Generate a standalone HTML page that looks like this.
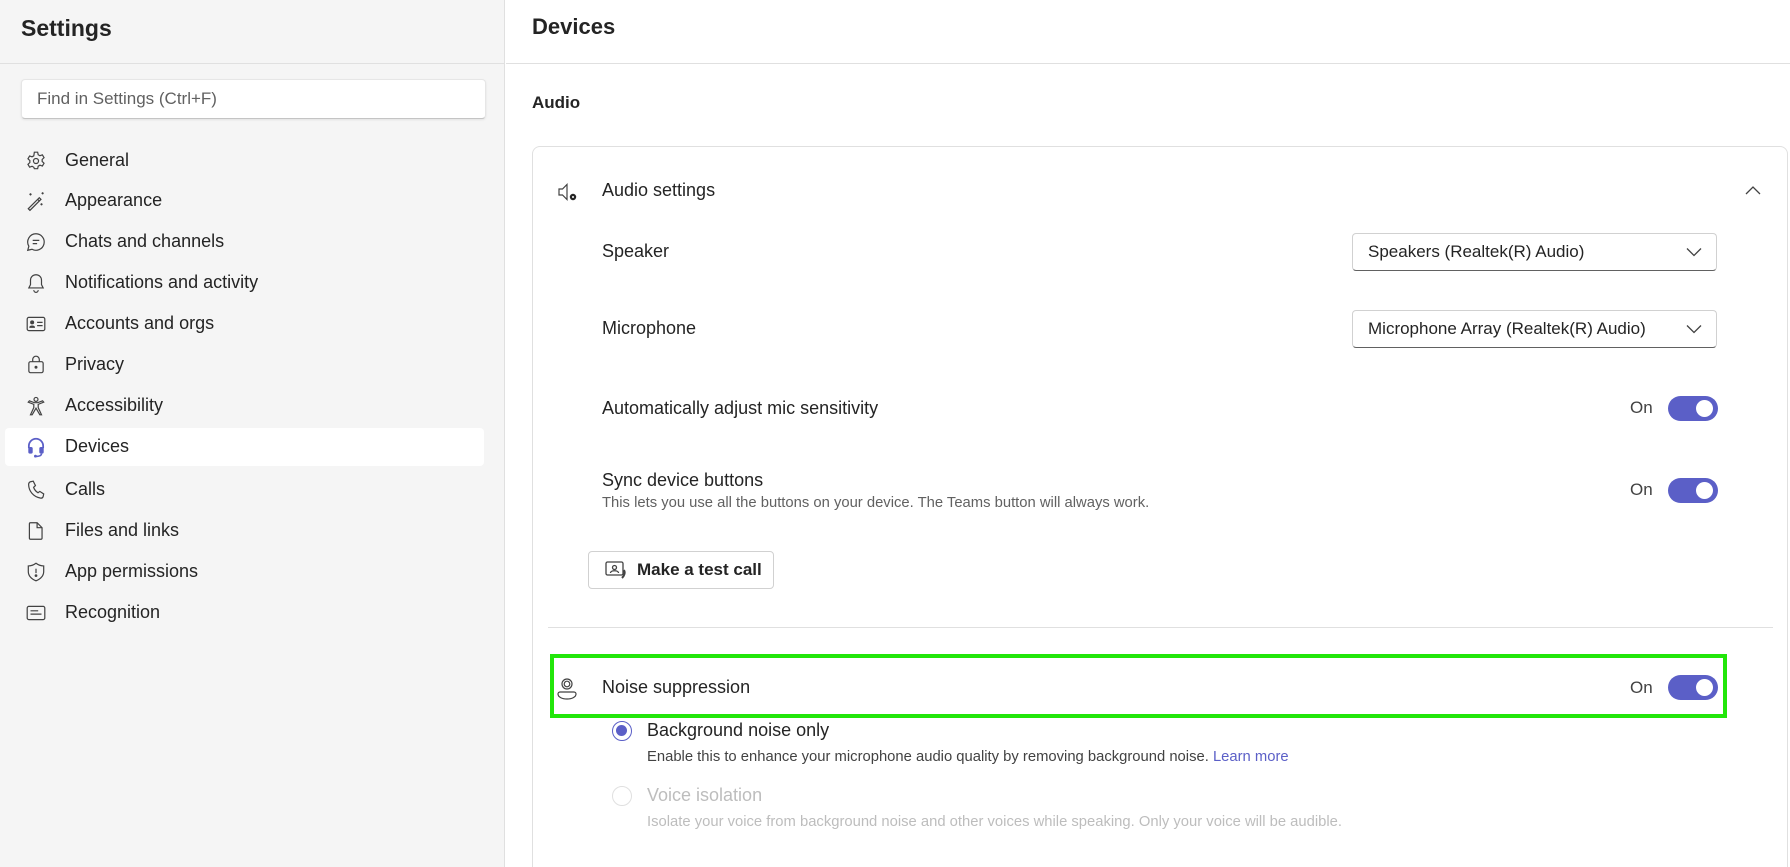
<!DOCTYPE html>
<html style="height:867px;overflow:hidden"><head><meta charset="utf-8"><style>
*{box-sizing:border-box;margin:0;padding:0}
body{width:1790px;height:867px;overflow:hidden;font-family:"Segoe UI","Liberation Sans",sans-serif;color:#242424;background:#fff;position:relative}
.abs{position:absolute}
#side{left:0;top:0;width:505px;height:867px;background:#f5f5f5;border-right:1px solid #e0e0e0}
.hline{height:1px;background:#e0e0e0}
.nav{position:absolute;left:0;width:505px;height:41px;display:flex;align-items:center;font-size:18px;color:#242424}
.nav svg{position:absolute;left:25px;width:22px;height:22px}
.nav span{position:absolute;left:65px}
.lbl{position:absolute;font-size:18px;white-space:nowrap}
.sub{position:absolute;font-size:14.8px;color:#616161;white-space:nowrap}
.dd{position:absolute;left:1352px;width:365px;height:38px;border:1px solid #d1d1d1;border-bottom:1px solid #616161;border-radius:4px;font-size:17px;padding:8px 15px;background:#fff}
.dd svg{position:absolute;right:14px;top:13px}
.tg{position:absolute;left:1668px;width:50px;height:25px;border-radius:13px;background:#5b5fc7}
.tg:after{content:"";position:absolute;right:5px;top:4px;width:17px;height:17px;border-radius:50%;background:#fff}
.on{position:absolute;left:1630px;font-size:17px;color:#424242}
</style></head><body>
<div id="side" class="abs">
  <div class="abs" style="left:21px;top:15px;font-size:23px;font-weight:bold">Settings</div>
  <div class="abs hline" style="left:0;top:63px;width:505px"></div>
  <div class="abs" style="left:21px;top:79px;width:465px;height:40px;background:#fff;border-radius:4px;border:1px solid #e6e6e6;border-bottom:1px solid #c4c4c4;box-shadow:0 1px 2px rgba(0,0,0,.08);font-size:17px;color:#616161;padding:9px 15px">Find in Settings (Ctrl+F)</div>
  <div class="abs" style="left:5px;top:428px;width:479px;height:38px;background:#fff;border-radius:4px"></div>
  <div class="nav" style="top:140px"><svg viewBox="0 0 20 20" fill="none" stroke="#424242" stroke-width="1.1"><path d="M8.5 2h3l.5 2.3 1.6.9 2.2-.8 1.5 2.6-1.7 1.6v1.8l1.7 1.6-1.5 2.6-2.2-.8-1.6.9-.5 2.3h-3L8 15.7l-1.6-.9-2.2.8-1.5-2.6 1.7-1.6V9.6L2.7 8 4.2 5.4l2.2.8L8 5.3z"/><circle cx="10" cy="10" r="2.3"/></svg><span>General</span></div>
  <div class="nav" style="top:180px"><svg viewBox="0 0 20 20" fill="none" stroke="#424242" stroke-width="1.1"><path d="M3 17L13 7l1.5 1.5-10 10z M11.5 8.5L13 10"/><path d="M5 3v2M4 4h2M16 2v2M15 3h2M15 12v2M14 13h2" /></svg><span>Appearance</span></div>
  <div class="nav" style="top:221px"><svg viewBox="0 0 20 20" fill="none" stroke="#424242" stroke-width="1.1"><path d="M10 2.5a7.5 7.5 0 1 1-3.6 14.1L2.5 17.5l1-3.7A7.5 7.5 0 0 1 10 2.5z"/><path d="M7 8.5h6M7 11.5h4"/></svg><span>Chats and channels</span></div>
  <div class="nav" style="top:262px"><svg viewBox="0 0 20 20" fill="none" stroke="#424242" stroke-width="1.1"><path d="M10 2.5c3 0 5 2.3 5 5v4l1.5 3h-13L5 11.5v-4c0-2.7 2-5 5-5z"/><path d="M8 16.5a2 2 0 0 0 4 0"/></svg><span>Notifications and activity</span></div>
  <div class="nav" style="top:303px"><svg viewBox="0 0 20 20" fill="none" stroke="#424242" stroke-width="1.1"><rect x="2" y="4" width="16" height="12" rx="1.5"/><circle cx="6.5" cy="8.5" r="1.3" fill="#424242"/><path d="M4.5 13c0-1.5 4-1.5 4 0z" fill="#424242"/><path d="M11 8.5h5M11 11.5h5"/></svg><span>Accounts and orgs</span></div>
  <div class="nav" style="top:344px"><svg viewBox="0 0 20 20" fill="none" stroke="#424242" stroke-width="1.1"><rect x="3.5" y="7" width="13" height="10" rx="1.5"/><path d="M7 7V5a3 3 0 0 1 6 0v2"/><circle cx="10" cy="12" r=".8" fill="#424242"/></svg><span>Privacy</span></div>
  <div class="nav" style="top:385px"><svg viewBox="0 0 20 20" fill="none" stroke="#424242" stroke-width="1.1"><circle cx="10" cy="4" r="1.8"/><path d="M3 6.5l5 2v3l-3 6.5h1.5L10 12l3.5 6H15l-3-6.5v-3l5-2-1-1.2-4.5 1.7h-3L4 5.3z"/></svg><span>Accessibility</span></div>
  <div class="nav" style="top:426px"><svg viewBox="0 0 20 20"><path d="M3.5 11V9a6.5 6.5 0 0 1 13 0v2" fill="none" stroke="#5b5fc7" stroke-width="1.6"/><rect x="3" y="10" width="4" height="6" rx="1.5" fill="#5b5fc7"/><rect x="13" y="10" width="4" height="6" rx="1.5" fill="#5b5fc7"/><path d="M15 16c0 2-3 2.5-5 2.5" fill="none" stroke="#5b5fc7" stroke-width="1.4"/><circle cx="9.5" cy="18.3" r="1.3" fill="#5b5fc7"/></svg><span>Devices</span></div>
  <div class="nav" style="top:469px"><svg viewBox="0 0 20 20" fill="none" stroke="#424242" stroke-width="1.1"><path d="M5 2.5l2.5-.5 2 4-1.7 1.5c.7 2 2 3.8 4 5l1.7-1.2 3.5 2.3-.5 2.4c-.4 1-1.5 1.6-2.7 1.3C7.5 16 3.5 11 3.3 5.2 3.3 4 4 2.8 5 2.5z"/></svg><span>Calls</span></div>
  <div class="nav" style="top:510px"><svg viewBox="0 0 20 20" fill="none" stroke="#424242" stroke-width="1.1"><path d="M5 2.5h6l4.5 4.5v9.5a1 1 0 0 1-1 1H5a1 1 0 0 1-1-1V3.5a1 1 0 0 1 1-1z"/><path d="M11 2.5V7h4.5"/></svg><span>Files and links</span></div>
  <div class="nav" style="top:551px"><svg viewBox="0 0 20 20" fill="none" stroke="#424242" stroke-width="1.1"><path d="M10 2c2.2 1.6 4.5 2.4 7 2.5v5c0 4-3 6.8-7 8.5-4-1.7-7-4.5-7-8.5v-5C5.5 4.4 7.8 3.6 10 2z"/><path d="M10 7v4"/><circle cx="10" cy="13.3" r=".7" fill="#424242"/></svg><span>App permissions</span></div>
  <div class="nav" style="top:592px"><svg viewBox="0 0 20 20" fill="none" stroke="#424242" stroke-width="1.1"><rect x="2" y="4" width="16" height="12" rx="1.5"/><path d="M5 8h7M5 11h10"/></svg><span>Recognition</span></div>
</div>

<div class="abs" style="left:532px;top:14px;font-size:22px;font-weight:bold">Devices</div>
<div class="abs hline" style="left:506px;top:63px;width:1284px"></div>
<div class="abs" style="left:532px;top:93px;font-size:17px;font-weight:bold">Audio</div>
<div class="abs" style="left:532px;top:146px;width:1256px;height:721px;border:1px solid #e0e0e0;border-bottom:none;border-radius:8px 8px 0 0"></div>

<svg class="abs" style="left:556px;top:181px" width="24" height="24" viewBox="0 0 24 24" fill="none" stroke="#424242" stroke-width="1.2"><path d="M3 8h3.5L11 3.5v15L6.5 14H3z"/><circle cx="17" cy="16" r="3.2" fill="#242424" stroke="none"/><circle cx="17" cy="16" r="1" fill="#fff" stroke="none"/></svg>
<div class="lbl" style="left:602px;top:180px">Audio settings</div>
<svg class="abs" style="left:1745px;top:185px" width="16" height="12" viewBox="0 0 16 12" fill="none" stroke="#424242" stroke-width="1.3"><path d="M1 9l7-7 7 7"/></svg>

<div class="lbl" style="left:602px;top:241px">Speaker</div>
<div class="dd" style="top:233px">Speakers (Realtek(R) Audio)<svg width="16" height="10" viewBox="0 0 16 10" fill="none" stroke="#424242" stroke-width="1.3"><path d="M1 1.5l7 7 7-7"/></svg></div>
<div class="lbl" style="left:602px;top:318px">Microphone</div>
<div class="dd" style="top:310px">Microphone Array (Realtek(R) Audio)<svg width="16" height="10" viewBox="0 0 16 10" fill="none" stroke="#424242" stroke-width="1.3"><path d="M1 1.5l7 7 7-7"/></svg></div>

<div class="lbl" style="left:602px;top:398px">Automatically adjust mic sensitivity</div>
<div class="on" style="top:398px">On</div><div class="tg" style="top:396px"></div>

<div class="lbl" style="left:602px;top:470px">Sync device buttons</div>
<div class="sub" style="left:602px;top:495px">This lets you use all the buttons on your device. The Teams button will always work.</div>
<div class="on" style="top:480px">On</div><div class="tg" style="top:478px"></div>

<div class="abs" style="left:588px;top:551px;width:186px;height:38px;border:1px solid #d1d1d1;border-radius:4px;font-size:17px;font-weight:bold;padding:8px 0 0 48px">Make a test call</div>
<svg class="abs" style="left:604px;top:559px" width="24" height="22" viewBox="0 0 24 22" fill="none" stroke="#424242" stroke-width="1.3"><rect x="2" y="3" width="17" height="13" rx="1.5"/><circle cx="10.5" cy="8.5" r="2"/><path d="M6.5 14c0-3 8-3 8 0"/><path d="M20 11c1 2 1 5-2 8" stroke-width="2"/></svg>

<div class="abs hline" style="left:548px;top:627px;width:1225px"></div>

<div class="abs" style="left:550px;top:654px;width:1177px;height:64px;border:4px solid #22e60a"></div>
<svg class="abs" style="left:556px;top:677px" width="22" height="24" viewBox="0 0 22 24" fill="none" stroke="#424242" stroke-width="1.2"><circle cx="11" cy="7" r="5"/><circle cx="11" cy="7" r="2.8"/><path d="M4 15h14a2 2 0 0 1 2 2c0 3-4 5-9 5s-9-2-9-5a2 2 0 0 1 2-2z"/></svg>
<div class="lbl" style="left:602px;top:677px">Noise suppression</div>
<div class="on" style="top:678px">On</div><div class="tg" style="top:675px"></div>

<div class="abs" style="left:612px;top:721px;width:20px;height:20px;border:1.5px solid #5b5fc7;border-radius:50%"><div style="margin:3px;width:11px;height:11px;border-radius:50%;background:#5b5fc7"></div></div>
<div class="lbl" style="left:647px;top:720px">Background noise only</div>
<div class="sub" style="left:647px;top:749px;color:#424242">Enable this to enhance your microphone audio quality by removing background noise. <span style="color:#5b5fc7">Learn more</span></div>

<div class="abs" style="left:612px;top:786px;width:20px;height:20px;border:1.5px solid #e0e0e0;border-radius:50%"></div>
<div class="lbl" style="left:647px;top:785px;color:#bdbdbd">Voice isolation</div>
<div class="sub" style="left:647px;top:814px;color:#bdbdbd">Isolate your voice from background noise and other voices while speaking. Only your voice will be audible.</div>
</body></html>
